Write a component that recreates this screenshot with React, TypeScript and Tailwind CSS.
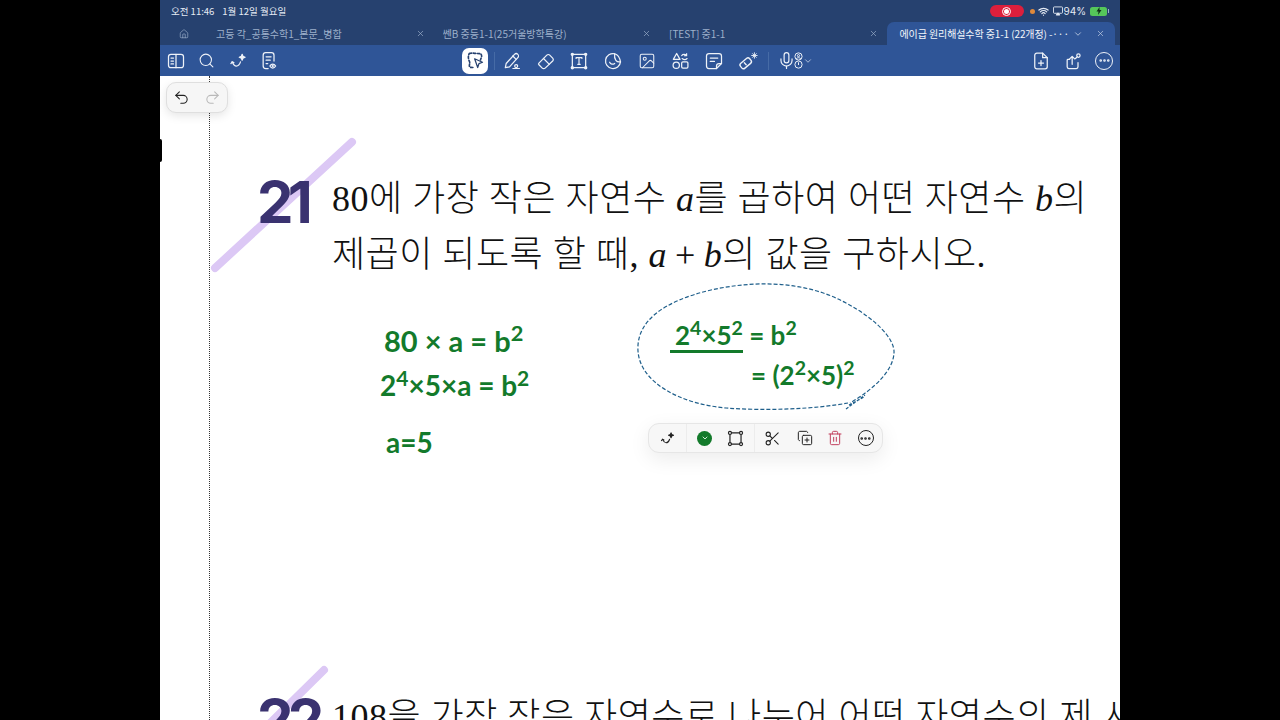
import {
  Search, Home, X, ChevronDown, Undo2, Redo2, Wifi, Scissors, Trash2, CopyPlus,
  Image, Mic, Ellipsis,
} from 'lucide-react';
import type { ReactNode } from 'react';

const sans = 'font-["Noto_Sans_CJK_KR","Noto_Sans",sans-serif]';
const serif = 'font-["Liberation_Serif","Noto_Sans_CJK_KR",serif]';
const ink = 'font-["Lato",sans-serif] font-bold text-[#137a2b] whitespace-nowrap';

function Svg({ size = 20, children }: { size?: number; children: ReactNode }) {
  return (
    <svg width={size} height={size} viewBox="0 0 24 24" fill="none" stroke="currentColor" strokeWidth="1.5" strokeLinecap="round" strokeLinejoin="round">
      {children}
    </svg>
  );
}

const BookIcon = () => (
  <Svg><rect x="3" y="4" width="18" height="16" rx="3" /><path d="M12 4v16M6 8.500h3M6 12h3M6 15.500h3" /></Svg>
);
const SparkleIcon = ({ size = 20 }: { size?: number }) => (
  <Svg size={size}><path d="M5 13c1 2 2 5 5 5s4-2 5-5" /><path d="M5 13l-1.500 2M5 13l2 1" /><path d="M17 4l1 2.500 2.500 1-2.500 1-1 2.500-1-2.500-2.500-1 2.500-1z" fill="currentColor" /></Svg>
);
const NoteEyeIcon = () => (
  <Svg><path d="M11 21H8a3 3 0 0 1-3-3V5a3 3 0 0 1 3-3h7a3 3 0 0 1 3 3v7" /><path d="M8.500 7h6M8.500 11h5M8.500 15h2" /><path d="M13 18c1-1.600 2.200-2.400 3.500-2.400s2.500.8 3.500 2.400c-1 1.600-2.200 2.400-3.500 2.400S14 19.600 13 18z" /><circle cx="16.500" cy="18" r=".6" /></Svg>
);
const LassoIcon = () => (
  <Svg size={21}>
    <path d="M5 4c3-1 6 0 9 0s5 0 5 3-2 3-1 5M9 20c-2 0-4 0-4-2s1-3 0-5-2-6 0-9" strokeDasharray="2.500 2" strokeWidth="1.900" />
    <path d="M11 10l9 4-4 1.500-1.500 4.500z" fill="#fff" strokeWidth="1.400" />
  </Svg>
);
const PenIcon = () => (
  <Svg><path d="M4 20l1-5L15 4c1-1 3-1 4 0s1 3 0 4L9 19z" /><path d="M13 6l4 4" /><circle cx="17" cy="18" r="1.800" /><path d="M13 21h8" strokeWidth="1.200" /></Svg>
);
const EraserIcon = () => (
  <Svg><path d="M3.500 14.500L13 5c1-1 2.500-1 3.500 0L20 8.500c1 1 1 2.500 0 3.500L11 20.500c-1 1-2.500 1-3.500 0L3.500 16.500c-.6-.6-.6-1.400 0-2z" /><path d="M9 9l7 7" /></Svg>
);
const TextBoxIcon = () => (
  <Svg>
    <rect x="4" y="4" width="16" height="16" />
    <path d="M8.500 9V8h7v1M12 8v8M10.500 16h3" strokeWidth="1.400" />
    <circle cx="4" cy="4" r="1.300" fill="currentColor" /><circle cx="20" cy="4" r="1.300" fill="currentColor" />
    <circle cx="4" cy="20" r="1.300" fill="currentColor" /><circle cx="20" cy="20" r="1.300" fill="currentColor" />
  </Svg>
);
const StickerIcon = () => (
  <Svg><path d="M14 3.300A9 9 0 1 0 21 13c-4.500 1-8-2.500-7-9.700z" /><path d="M14 3.300c3.500 1 6 4 7 9.700" /><path d="M8 13.500c1 2.500 4 3 6 1.500" /></Svg>
);
const ShapesIcon = () => (
  <Svg>
    <path d="M8 3l4 7H4z" /><circle cx="7.500" cy="17" r="3.800" /><rect x="14" y="13" width="7.500" height="7.500" rx="1.500" />
    <path d="M14 5.500c1.500-2 4-2 6 0M20 3v2.700h-2.700M20.500 9c-1.500 1.500-4 1.500-6 0" strokeWidth="1.300" />
  </Svg>
);
const NoteIcon = () => (
  <Svg><path d="M15 21H6a3 3 0 0 1-3-3V6a3 3 0 0 1 3-3h12a3 3 0 0 1 3 3v9z" /><path d="M15 21v-3a3 3 0 0 1 3-3h3" /><path d="M7.500 8.500h9M7.500 12.500h5" /></Svg>
);
const HighlightIcon = () => (
  <Svg size={22}>
    <rect x="3" y="11" width="13" height="7" rx="2.500" transform="rotate(-40 9.500 14.500)" />
    <path d="M8 14l2 2" />
    <path d="M19 3v6M16 6h6M17 4l4 4M21 4l-4 4" strokeWidth="1" />
  </Svg>
);
const MicPeopleIcon = () => (
  <span className="flex items-center">
    <Mic size={19} strokeWidth={1.500} />
    <svg width="9" height="17" viewBox="0 0 10 18" fill="none" stroke="currentColor" strokeWidth="1.100" className="-ml-[2px]">
      <circle cx="5" cy="4.500" r="4" /><circle cx="5" cy="3.600" r="1.200" /><path d="M2.500 7c1-1.400 4-1.400 5 0" />
      <circle cx="5" cy="13.500" r="4" /><path d="M5 11v3" />
    </svg>
  </span>
);
const FileAddIcon = () => (
  <Svg><path d="M14 2.500H7a2.500 2.500 0 0 0-2.500 2.500v14A2.500 2.500 0 0 0 7 21.500h10a2.500 2.500 0 0 0 2.500-2.500V8z" /><path d="M14 2.500V8h5.500M12 11.500v6M9 14.500h6" /></Svg>
);
const UploadKeyIcon = () => (
  <Svg><path d="M8 10H6a1 1 0 0 0-1 1v8a2 2 0 0 0 2 2h9a2 2 0 0 0 2-2v-5" /><path d="M11 16V7M8 9.500L11 6.500l3 3" /><circle cx="18.500" cy="5.500" r="2" /><path d="M17 7l-2 2" /></Svg>
);
const MoreCircle = ({ size = 21 }: { size?: number }) => (
  <span className="relative flex items-center justify-center rounded-full border-[1.5px] border-current" style={{ width: size - 3, height: size - 3 }}>
    <Ellipsis size={13} strokeWidth={2.800} />
  </span>
);
const FrameIcon = () => (
  <Svg size={19}>
    <rect x="5" y="5" width="14" height="14" />
    <circle cx="5" cy="5" r="1.900" fill="#fff" /><circle cx="19" cy="5" r="1.900" fill="#fff" />
    <circle cx="5" cy="19" r="1.900" fill="#fff" /><circle cx="19" cy="19" r="1.900" fill="#fff" />
  </Svg>
);

function Tab({ title }: { title: string }) {
  return (
    <div className="w-[226.500px] flex items-center pl-[9px] pr-[9px] text-[#9db0cb]">
      <span className="flex-1 text-[10px] truncate">{title}</span>
      <X size={9} strokeWidth={1.800} />
    </div>
  );
}

function Tool({ children, w = 'w-[33.700px]' }: { children: ReactNode; w?: string }) {
  return <div className={`${w} h-[26px] flex items-center justify-center shrink-0`}>{children}</div>;
}

function TopBar() {
  return (
    <div className={`${sans} text-white`}>
      <div className="bg-[#26416f] h-[22px] flex items-center pl-[11px] pr-[11px] text-[9.500px] text-[#e4eaf3]">
        <span>오전 11:46</span>
        <span className="ml-[8px]">1월 12일 월요일</span>
        <div className="ml-auto flex items-center">
          <span className="w-[34px] h-[12px] rounded-full bg-[#dc1f3c] flex items-center justify-center">
            <span className="w-[9px] h-[9px] rounded-full border border-white flex items-center justify-center">
              <span className="w-[5px] h-[5px] rounded-full bg-white" />
            </span>
          </span>
          <span className="ml-[6px] w-[5px] h-[5px] rounded-full bg-[#e08a3c]" />
          <Wifi size={11} strokeWidth={2.600} className="ml-[3px]" />
          <svg width="10" height="10" viewBox="0 0 11 10" fill="none" stroke="currentColor" className="ml-[4px]">
            <rect x=".5" y=".5" width="10" height="7" rx="1" /><path d="M3.500 9.500h4L5.500 7z" fill="currentColor" />
          </svg>
          <span className="ml-[1px] font-['Inter',sans-serif] text-[10px]">94%</span>
          <span className="ml-[4px] w-[17px] h-[9px] rounded-[2.500px] bg-[#55c75a] flex items-center justify-center text-[#10301a]">
            <svg width="8" height="8" viewBox="0 0 8 8" fill="currentColor"><path d="M4.500 0L1.500 4.500h2L3 8l3.500-5h-2z" /></svg>
          </span>
          <span className="w-[1px] h-[4px] ml-[1px] bg-[#9db0cb]" />
        </div>
      </div>
      <div className="bg-[#26416f] h-[23px] flex items-stretch">
        <div className="w-[47px] pl-[19px] flex items-center text-[#9db0cb]">
          <Home size={10} strokeWidth={1.600} />
        </div>
        <Tab title="고등 각_공통수학1_본문_병합" />
        <Tab title="쎈B 중등1-1(25거울방학특강)" />
        <Tab title="[TEST] 중1-1" />
        <div className="w-[228px] bg-[#2f5597] rounded-t-[7px] flex items-center pl-[13px] pr-[10px] text-[#f2f5fa]">
          <span className="flex-1 min-w-0 text-[10px] whitespace-nowrap tracking-[-0.010em]">에이급 원리해설수학 중1-1 (22개정) -···</span>
          <ChevronDown size={10} className="ml-[6px] text-[#c3d0e4]" />
          <X size={9} strokeWidth={1.800} className="ml-[13px] text-[#c3d0e4]" />
        </div>
      </div>
      <div className="bg-[#2f5597] h-[31px] flex items-center text-[#eef2f8]">
        <Tool w="w-[31px]"><BookIcon /></Tool>
        <Tool w="w-[31px]"><Search size={17} strokeWidth={1.500} /></Tool>
        <Tool w="w-[31px]"><SparkleIcon /></Tool>
        <Tool w="w-[31px]"><NoteEyeIcon /></Tool>
        <div className="ml-[178px] w-[26px] h-[26px] bg-white rounded-[7px] flex items-center justify-center text-[#26416f]">
          <LassoIcon />
        </div>
        <div className="w-[1px] h-[18px] bg-[#466ba6] ml-[6px]" />
        <Tool><PenIcon /></Tool>
        <Tool><EraserIcon /></Tool>
        <Tool><TextBoxIcon /></Tool>
        <Tool><StickerIcon /></Tool>
        <Tool><Image size={18} strokeWidth={1.400} /></Tool>
        <Tool><ShapesIcon /></Tool>
        <Tool><NoteIcon /></Tool>
        <Tool><HighlightIcon /></Tool>
        <div className="w-[1px] h-[18px] bg-[#466ba6] ml-[3px]" />
        <div className="ml-[8px] flex items-center">
          <MicPeopleIcon />
          <ChevronDown size={10} className="text-[#c3d0e4]" />
        </div>
        <div className="ml-auto flex items-center">
          <Tool w="w-[31.500px]"><FileAddIcon /></Tool>
          <Tool w="w-[31.500px]"><UploadKeyIcon /></Tool>
          <Tool w="w-[31.500px]"><MoreCircle /></Tool>
        </div>
      </div>
    </div>
  );
}

function Problem({ num, strike, top, children }: { num: string; strike: ReactNode; top: string; children: ReactNode }) {
  return (
    <div className={`relative flex pl-[47px] ${top}`}>
      {strike}
      <div className="relative w-[75px] shrink-0 pt-[4px] font-['Inter',sans-serif] font-bold text-[58px] leading-[55px] tracking-[-0.100em] text-[#3a3270]">
        {num}
      </div>
      <div className={`relative ${serif} font-light text-[36px] leading-[56px] tracking-[0.5px] text-[#111] whitespace-nowrap`}>{children}</div>
    </div>
  );
}

function LassoToolbar() {
  return (
    <div className="mt-[9px] ml-[12px] w-[235px] h-[30px] rounded-[11px] bg-[#f7f7f7] border border-[#e6e6e6] shadow-[0_6px_20px_rgba(0,0,0,0.08)] flex items-center text-[#222]">
      <Tool w="w-[37px]"><SparkleIcon size={17} /></Tool>
      <div className="w-[1px] h-full bg-[#ececec]" />
      <Tool w="w-[35px]">
        <span className="w-[15px] h-[15px] rounded-full bg-[#137a2b] flex items-center justify-center text-[#cfe8d4]">
          <ChevronDown size={8} strokeWidth={3} />
        </span>
      </Tool>
      <Tool w="w-[27px]"><FrameIcon /></Tool>
      <div className="w-[1px] h-full bg-[#ececec] ml-[5px]" />
      <Tool w="w-[35px]"><Scissors size={17} strokeWidth={1.500} /></Tool>
      <Tool w="w-[29px]"><CopyPlus size={16} strokeWidth={1.500} /></Tool>
      <Tool w="w-[31px]"><Trash2 size={16} strokeWidth={1.500} className="text-[#c2405e]" /></Tool>
      <Tool w="w-[31px]"><MoreCircle size={19} /></Tool>
    </div>
  );
}

function Work() {
  return (
    <div className="flex pl-[170px]">
      <div className="w-[256px] shrink-0 pt-[35px]">
        <div className={`${ink} text-[29px] leading-[45px] ml-[4px]`}>80 × a = b<sup>2</sup></div>
        <div className={`${ink} text-[28px] leading-[45px]`}>2<sup>4</sup>×5×a = b<sup>2</sup></div>
        <div className={`${ink} text-[28px] leading-[45px] mt-[12px] ml-[6px]`}>a=5</div>
      </div>
      <div>
        <div className="relative w-[262px] h-[131px] pt-[35px]">
          <svg className="absolute left-0 top-[-2px]" width="262" height="133" viewBox="0 0 262 133" fill="none" stroke="#1f5f8b" strokeWidth="1.200" strokeDasharray="4 2">
            <path d="M212 122c-32 6-82 8-122 5C45 123 4 102 2 70 0 40 28 20 75 9 120 -1 170 0 210 22c30 16 49 36 48 50-1 18-20 36-44 50" />
            <path d="M210 128l19-14M213 124l15-8" strokeDasharray="3 1.500" />
          </svg>
          <div className={`${ink} text-[26px] leading-[34px] pl-[34px]`}>
            <span className="border-b-[3px] border-[#137a2b] inline-block leading-[30px] pl-[5px]">2<sup>4</sup>×5<sup>2</sup></span> = b<sup>2</sup>
          </div>
          <div className={`${ink} text-[26px] leading-[36px] pl-[115px] pt-[4px]`}>= (2<sup>2</sup>×5)<sup>2</sup></div>
        </div>
        <LassoToolbar />
      </div>
    </div>
  );
}

export default function App() {
  return (
    <div className="h-screen bg-black overflow-hidden flex justify-center">
      <div className="relative w-[960px] h-[720px] overflow-hidden bg-white">
        <TopBar />
        <div className="pl-[49px] h-[644px]">
          <div className="h-full border-l-[1.500px] border-dotted border-[#333] pt-[95px]">
            <Problem
              num="21"
              top=""
              strike={
                <svg className="absolute left-0 top-[-36px]" width="150" height="140" viewBox="0 0 150 140" fill="none">
                  <path d="M5 133L142 7" stroke="#dcc8f5" strokeWidth="8" strokeLinecap="round" />
                </svg>
              }
            >
              <div>80에 가장 작은 자연수 <i>a</i>를 곱하여 어떤 자연수 <i>b</i>의</div>
              <div>제곱이 되도록 할 때, <i>a</i><span className="mx-[8px]">+</span><i>b</i>의 값을 구하시오.</div>
            </Problem>
            <Work />
            <Problem
              num="22"
              top="mt-[224px]"
              strike={
                <svg className="absolute left-[38px] top-[-24px]" width="90" height="80" viewBox="0 0 90 80" fill="none">
                  <path d="M76 5L10 70" stroke="#dcc8f5" strokeWidth="8" strokeLinecap="round" />
                </svg>
              }
            >
              <div>108을 가장 작은 자연수로 나누어 어떤 자연수의 제 시</div>
            </Problem>
          </div>
        </div>
        <div className="absolute left-[6px] top-[82px] w-[62px] h-[31px] rounded-[10px] bg-[#f6f6f6] border border-[#dfdfdf] shadow-[0_3px_10px_rgba(0,0,0,0.1)] flex items-center justify-center gap-[14px]">
          <Undo2 size={17} strokeWidth={1.500} className="text-[#222]" />
          <Redo2 size={17} strokeWidth={1.500} className="text-[#b9b9b9]" />
        </div>
        <div className="absolute left-0 top-[139px] w-[2px] h-[23px] rounded-r-full bg-black" />
      </div>
    </div>
  );
}
